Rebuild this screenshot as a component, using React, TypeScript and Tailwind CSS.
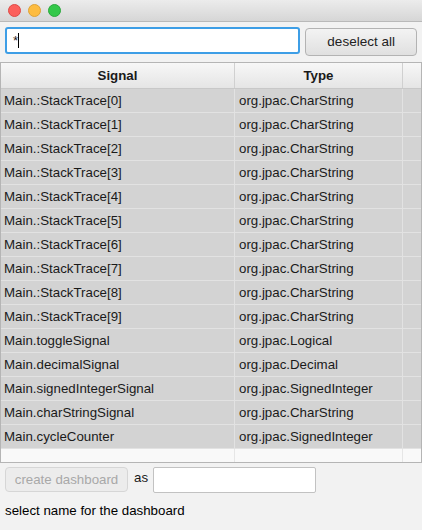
import React from "react";

interface SignalRow {
  signal: string;
  type: string;
}

const rows: SignalRow[] = [
  ...Array.from({ length: 10 }, (_, i) => ({
    signal: `Main.:StackTrace[${i}]`,
    type: "org.jpac.CharString",
  })),
  { signal: "Main.toggleSignal", type: "org.jpac.Logical" },
  { signal: "Main.decimalSignal", type: "org.jpac.Decimal" },
  { signal: "Main.signedIntegerSignal", type: "org.jpac.SignedInteger" },
  { signal: "Main.charStringSignal", type: "org.jpac.CharString" },
  { signal: "Main.cycleCounter", type: "org.jpac.SignedInteger" },
];

const App = () => {
  return (
    <div
      className="w-[422px] h-[530px] bg-[#f2f2f2] flex flex-col text-[13.3px] text-[#1a1a1a] overflow-hidden"
      style={{ fontFamily: '"Liberation Sans", Arial, sans-serif' }}
    >
      {/* title bar */}
      <div className="h-[22px] shrink-0 flex items-center gap-[7px] pl-[8px] bg-gradient-to-b from-[#ececec] to-[#d6d6d6] border-b border-[#b9b9b9]">
        <span className="w-[13px] h-[13px] rounded-full bg-[#fc605c] border border-[#de4a46]" />
        <span className="w-[13px] h-[13px] rounded-full bg-[#fdbc40] border border-[#dea236]" />
        <span className="w-[13px] h-[13px] rounded-full bg-[#34c84a] border border-[#2aa83c]" />
      </div>

      {/* search row */}
      <div className="flex items-start gap-[5px] px-[5px] pt-[5px] h-[40px] shrink-0">
        <div className="w-[296px] h-[27px] rounded-[3px] border-2 border-[#3d9ee6] bg-white flex items-center pl-[6px]">
          <span>*</span>
          <span className="w-px h-[15px] bg-black" />
        </div>
        <button className="w-[112px] h-[28px] mt-px rounded-[4px] border border-[#b3b3b3] bg-gradient-to-b from-[#f3f3f3] to-[#e0e0e0] text-[13.5px] text-[#222]">
          deselect all
        </button>
      </div>

      {/* table */}
      <div className="h-[401px] shrink-0 border border-[#b5b5b5] bg-[#f9f9f9] flex flex-col">
        <div className="h-[26px] shrink-0 flex bg-gradient-to-b from-[#f7f7f7] to-[#e5e5e5] border-b border-[#c8c8c8] font-bold">
          <div className="w-[234px] flex items-center justify-center border-r border-[#d0d0d0]">Signal</div>
          <div className="w-[168px] flex items-center justify-center border-r border-[#d0d0d0]">Type</div>
          <div className="flex-1" />
        </div>
        {rows.map((r) => (
          <div key={r.signal} className="h-[24px] shrink-0 flex bg-[#d3d3d3] border-b border-[#e2e2e2]">
            <div className="w-[234px] flex items-center pl-[3px] border-r border-[#e2e2e2]">{r.signal}</div>
            <div className="w-[168px] flex items-center pl-[4px] border-r border-[#e2e2e2]">{r.type}</div>
            <div className="flex-1" />
          </div>
        ))}
        <div className="flex-1 flex">
          <div className="w-[234px] border-r border-[#e6e6e6]" />
          <div className="w-[168px] border-r border-[#e6e6e6]" />
        </div>
      </div>

      {/* bottom controls */}
      <div className="flex items-start px-[5px] pt-[4px]">
        <button className="w-[123px] h-[25px] rounded-[4px] border border-[#d6d6d6] bg-[#ececec] text-[#a8a8a8]" disabled>
          create dashboard
        </button>
        <span className="ml-[6px] mt-[1px]">as</span>
        <div className="ml-[5px] w-[163px] h-[26px] bg-white border border-[#c2c2c2] rounded-[2px]" />
      </div>
      <div className="px-[5px] mt-[8px] text-black">select name for the dashboard</div>
    </div>
  );
};

export default App;
